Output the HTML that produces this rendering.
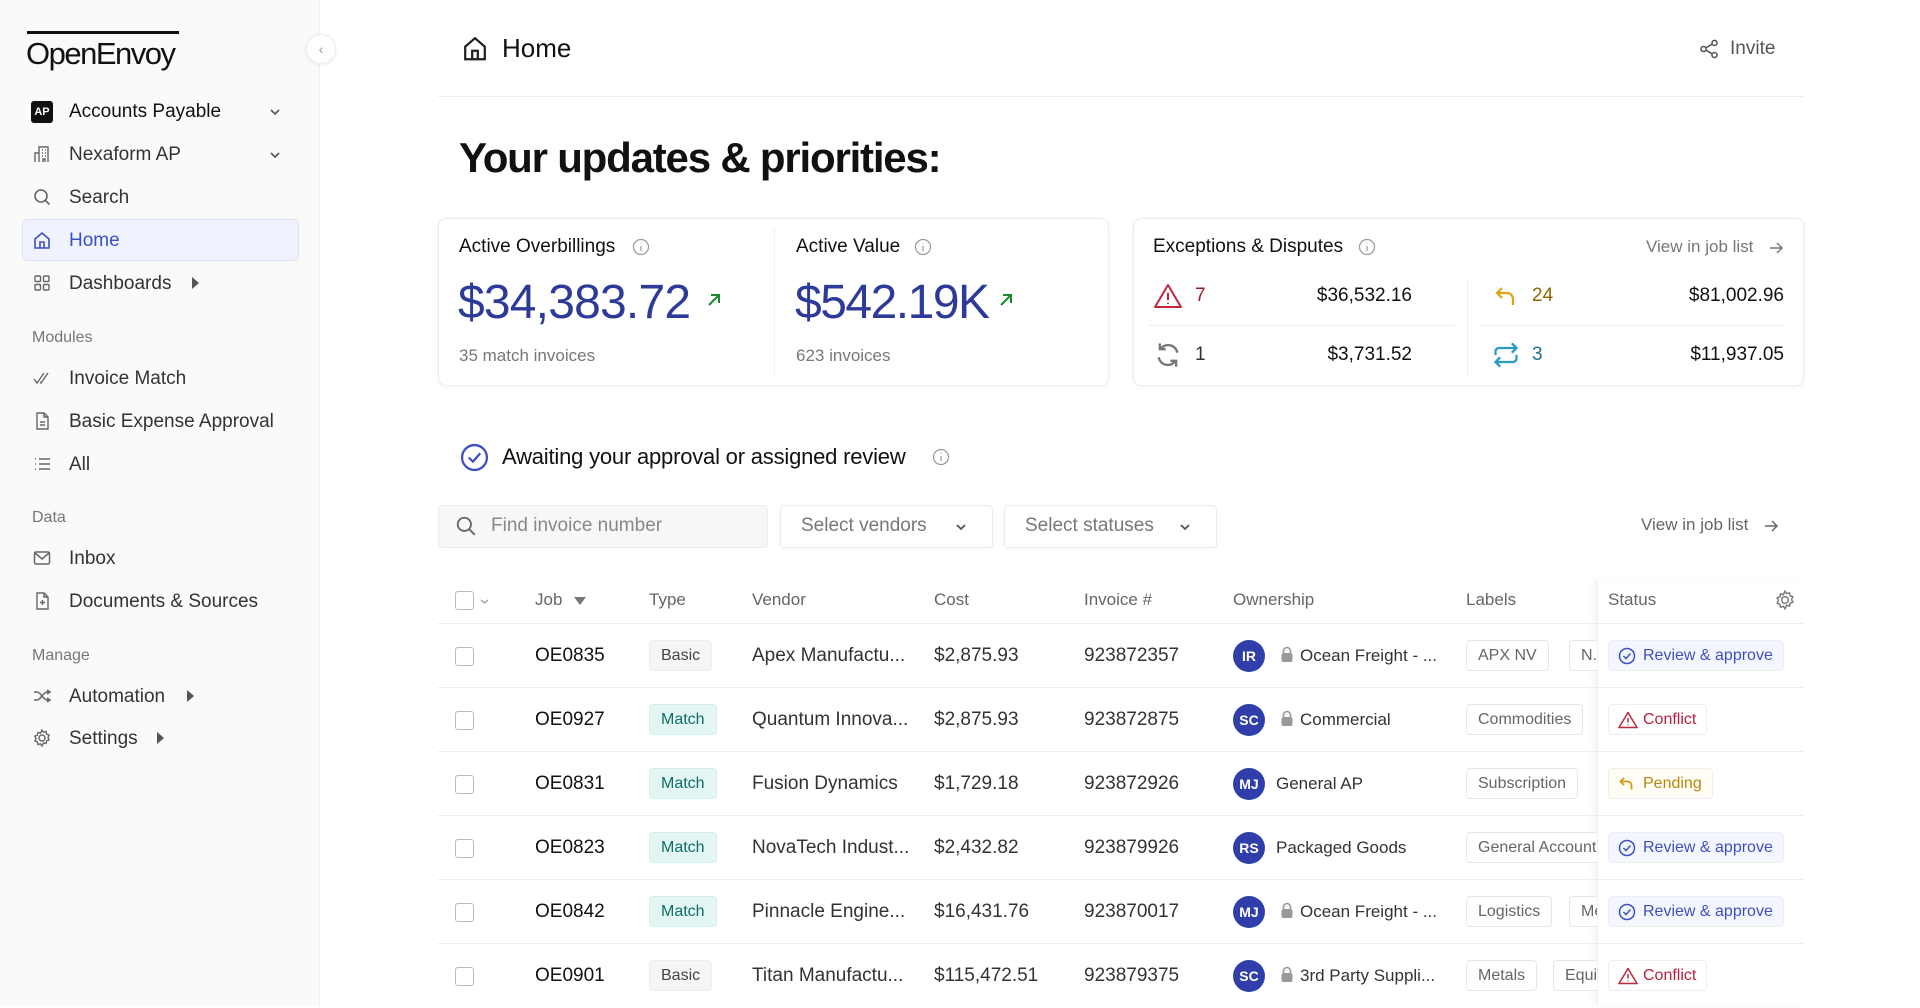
<!DOCTYPE html>
<html><head><meta charset="utf-8"><style>
*{box-sizing:border-box;margin:0;padding:0}
body{width:1920px;height:1006px;overflow:hidden;background:#fff;font-family:"Liberation Sans",sans-serif;color:#1f1f1f;position:relative}
.a{position:absolute;white-space:nowrap}
.t{position:absolute;white-space:nowrap;line-height:24px}
.side{position:absolute;left:0;top:0;width:320px;height:1006px;background:#fafafa;border-right:1px solid #efefef}
.nav{font-size:19px;color:#333}
.sec{font-size:16px;color:#777}
.ic{position:absolute;left:32px;width:20px;height:20px}
.card{position:absolute;border:1px solid #ececec;border-radius:8px;background:#fff;box-shadow:0 1px 4px rgba(0,0,0,.05)}
.th{font-size:17px;color:#666}
.row{position:absolute;left:438px;width:1366px;height:64px;border-bottom:1px solid #eee}
.cb{position:absolute;left:17px;top:23px;width:19px;height:19px;border:1.5px solid #bbb;border-radius:3px}
.c{position:absolute;top:20px;line-height:24px;font-size:19px;white-space:nowrap;color:#333}
.badge{position:absolute;top:16px;height:31px;line-height:29px;padding:0 11px;font-size:16px;border-radius:4px;border:1px solid #eee}
.lab{position:absolute;top:16px;height:31px;line-height:29px;padding:0 11px;font-size:16px;border-radius:4px;border:1px solid #e6e6e6;color:#666;background:#fff}
.av{position:absolute;left:795px;top:16px;width:32px;height:32px;border-radius:50%;background:#2f3ea8;color:#fff;font-size:14px;font-weight:bold;text-align:center;line-height:32px}
.lk{position:absolute;left:842px;top:22px}
.st{position:absolute;left:1170px;top:16px;height:31px;line-height:29px;padding:0 10px 0 34px;font-size:16px;border-radius:4px;border:1px solid #eee;background:#fff}
.st svg{position:absolute;left:9px;top:6px}
</style></head><body>
<svg width="0" height="0" style="position:absolute"><defs><g id="lock"><path d="M3.5 7V5a3.5 3.5 0 0 1 7 0v2" fill="none" stroke="#999" stroke-width="1.6"/><rect x="1.5" y="7" width="11" height="9" rx="2" fill="#999"/></g></defs></svg>
<div class="side">
  <div class="a" style="left:27px;top:31px;width:152px;height:3px;background:#111"></div>
  <div class="a" style="left:26px;top:35px;font-size:31px;letter-spacing:-1.5px;color:#111;line-height:38px">OpenEnvoy</div>
  <div class="a" style="left:306px;top:34px;width:30px;height:30px;border-radius:50%;background:#fff;border:1px solid #eee;box-shadow:0 1px 3px rgba(0,0,0,.08);text-align:center;line-height:28px;color:#999;font-size:14px">&#8249;</div>

  <div class="a" style="left:31px;top:101px;width:22px;height:22px;background:#111;border-radius:3px;color:#fff;font-size:11px;font-weight:bold;text-align:center;line-height:22px">AP</div>
  <div class="t nav" style="left:69px;top:100px;color:#111">Accounts Payable</div>
  <svg class="a" style="left:268px;top:105px" width="14" height="14" viewBox="0 0 14 14"><path d="M3 5l4 4 4-4" fill="none" stroke="#555" stroke-width="1.6"/></svg>

  <svg class="ic" style="top:144px" viewBox="0 0 20 20" fill="none" stroke="#666" stroke-width="1.4"><path d="M3 18V9h4v9M7 18V3h9v15M10 6h1M13 6h1M10 9h1M13 9h1M10 12h1M13 12h1M11 18v-3h2v3"/></svg>
  <div class="t nav" style="left:69px;top:143px">Nexaform AP</div>
  <svg class="a" style="left:268px;top:148px" width="14" height="14" viewBox="0 0 14 14"><path d="M3 5l4 4 4-4" fill="none" stroke="#555" stroke-width="1.6"/></svg>

  <svg class="ic" style="top:187px" viewBox="0 0 20 20" fill="none" stroke="#666" stroke-width="1.6"><circle cx="9" cy="9" r="6"/><path d="M13.5 13.5l4 4"/></svg>
  <div class="t nav" style="left:69px;top:186px">Search</div>

  <div class="a" style="left:22px;top:219px;width:277px;height:42px;background:#f0f2fd;border:1px solid #dde2f7;border-radius:5px"></div>
  <svg class="ic" style="top:230px" viewBox="0 0 20 20" fill="none" stroke="#3d4fc4" stroke-width="1.6"><path d="M3 9l7-6 7 6v9H3z"/><path d="M8 18v-6h4v6"/></svg>
  <div class="t nav" style="left:69px;top:229px;color:#3d4fc4">Home</div>

  <svg class="ic" style="top:273px" viewBox="0 0 20 20" fill="none" stroke="#666" stroke-width="1.4"><rect x="3" y="3" width="5.5" height="5.5" rx="1"/><rect x="11.5" y="3" width="5.5" height="5.5" rx="1"/><rect x="3" y="11.5" width="5.5" height="5.5" rx="1"/><rect x="11.5" y="11.5" width="5.5" height="5.5" rx="1"/></svg>
  <div class="t nav" style="left:69px;top:272px">Dashboards</div>
  <div class="a" style="left:192px;top:277px;width:0;height:0;border-left:7px solid #555;border-top:6px solid transparent;border-bottom:6px solid transparent"></div>

  <div class="t sec" style="left:32px;top:326px">Modules</div>
  <svg class="ic" style="top:368px" viewBox="0 0 20 20" fill="none" stroke="#666" stroke-width="1.4"><path d="M2 11l3 4 7-10M8 14l1 1 7-10"/></svg>
  <div class="t nav" style="left:69px;top:367px">Invoice Match</div>
  <svg class="ic" style="top:411px" viewBox="0 0 20 20" fill="none" stroke="#666" stroke-width="1.4"><path d="M5 2h7l4 4v12H5zM12 2v4h4M8 11h5M8 14h5"/></svg>
  <div class="t nav" style="left:69px;top:410px">Basic Expense Approval</div>
  <svg class="ic" style="top:454px" viewBox="0 0 20 20" fill="none" stroke="#666" stroke-width="1.4"><path d="M7 5h11M7 10h11M7 15h11M3 5h1M3 10h1M3 15h1"/></svg>
  <div class="t nav" style="left:69px;top:453px">All</div>

  <div class="t sec" style="left:32px;top:506px">Data</div>
  <svg class="ic" style="top:548px" viewBox="0 0 20 20" fill="none" stroke="#666" stroke-width="1.5"><rect x="2.5" y="4" width="15" height="12" rx="1.5"/><path d="M3 5l7 6 7-6"/></svg>
  <div class="t nav" style="left:69px;top:547px">Inbox</div>
  <svg class="ic" style="top:591px" viewBox="0 0 20 20" fill="none" stroke="#666" stroke-width="1.4"><path d="M5 2h7l4 4v12H5zM12 2v4h4M10.5 9v5M8 11.5h5"/></svg>
  <div class="t nav" style="left:69px;top:590px">Documents &amp; Sources</div>

  <div class="t sec" style="left:32px;top:644px">Manage</div>
  <svg class="ic" style="top:686px" viewBox="0 0 20 20" fill="none" stroke="#666" stroke-width="1.5"><path d="M2 6h3c4 0 6 8 10 8h3M2 14h3c4 0 6-8 10-8h3M15 4l3 2-3 2M15 12l3 2-3 2"/></svg>
  <div class="t nav" style="left:69px;top:685px">Automation</div>
  <div class="a" style="left:187px;top:690px;width:0;height:0;border-left:7px solid #555;border-top:6px solid transparent;border-bottom:6px solid transparent"></div>
  <svg class="ic" style="top:728px" viewBox="0 0 20 20" fill="none" stroke="#666" stroke-width="1.4"><circle cx="10" cy="10" r="3"/><path d="M10 2l1.5 2.2 2.6-.7.5 2.6 2.5 1-1.1 2.4 1.1 2.4-2.5 1-.5 2.6-2.6-.7L10 18l-1.5-2.2-2.6.7-.5-2.6-2.5-1L4 10.5 2.9 8.1l2.5-1 .5-2.6 2.6.7z"/></svg>
  <div class="t nav" style="left:69px;top:727px">Settings</div>
  <div class="a" style="left:157px;top:732px;width:0;height:0;border-left:7px solid #555;border-top:6px solid transparent;border-bottom:6px solid transparent"></div>
</div>

<!-- header -->
<svg class="a" style="left:461px;top:34px" width="28" height="28" viewBox="0 0 20 20" fill="none" stroke="#222" stroke-width="1.6"><path d="M3 9l7-6 7 6v9H3z"/><path d="M8 18v-6h4v6"/></svg>
<div class="a" style="left:502px;top:33px;font-size:26px;line-height:30px;color:#111">Home</div>
<svg class="a" style="left:1698px;top:38px" width="22" height="22" viewBox="0 0 20 20" fill="none" stroke="#555" stroke-width="1.4"><circle cx="15" cy="4.5" r="2.3"/><circle cx="5" cy="10" r="2.3"/><circle cx="15" cy="15.5" r="2.3"/><path d="M7 9l6-3.5M7 11l6 3.5"/></svg>
<div class="t" style="left:1730px;top:37px;font-size:19px;color:#555">Invite</div>
<div class="a" style="left:438px;top:96px;width:1366px;height:1px;background:#eee"></div>

<div class="a" style="left:459px;top:131px;font-size:42px;line-height:54px;font-weight:bold;color:#111;letter-spacing:-1.2px">Your updates &amp; priorities:</div>

<!-- card 1 -->
<div class="card" style="left:438px;top:218px;width:671px;height:168px"></div>
<div class="a" style="left:774px;top:228px;width:1px;height:148px;background:#f0f0f0"></div>
<div class="t" style="left:459px;top:235px;font-size:19px;color:#111">Active Overbillings</div>
<svg class="a" style="left:632px;top:238px" width="18" height="18" viewBox="0 0 18 18" fill="none" stroke="#999" stroke-width="1.2"><circle cx="9" cy="9" r="7.5"/><path d="M9 8v5M9 5.2v.5"/></svg>
<div class="a" style="left:458px;top:275px;font-size:48px;line-height:56px;color:#2d3a99;letter-spacing:-.8px">$34,383.72</div>
<svg class="a" style="left:706px;top:292px" width="16" height="16" viewBox="0 0 16 16" fill="none" stroke="#1a8a2e" stroke-width="2"><path d="M3 13L13 3M5 3h8v8"/></svg>
<div class="t" style="left:459px;top:344px;font-size:17px;color:#777">35 match invoices</div>
<div class="t" style="left:796px;top:235px;font-size:19px;color:#111">Active Value</div>
<svg class="a" style="left:914px;top:238px" width="18" height="18" viewBox="0 0 18 18" fill="none" stroke="#999" stroke-width="1.2"><circle cx="9" cy="9" r="7.5"/><path d="M9 8v5M9 5.2v.5"/></svg>
<div class="a" style="left:795px;top:275px;font-size:48px;line-height:56px;color:#2d3a99;letter-spacing:-1.5px">$542.19K</div>
<svg class="a" style="left:998px;top:292px" width="16" height="16" viewBox="0 0 16 16" fill="none" stroke="#1a8a2e" stroke-width="2"><path d="M3 13L13 3M5 3h8v8"/></svg>
<div class="t" style="left:796px;top:344px;font-size:17px;color:#777">623 invoices</div>

<!-- card 2 -->
<div class="card" style="left:1133px;top:218px;width:671px;height:168px"></div>
<div class="t" style="left:1153px;top:235px;font-size:19px;color:#111">Exceptions &amp; Disputes</div>
<svg class="a" style="left:1358px;top:238px" width="18" height="18" viewBox="0 0 18 18" fill="none" stroke="#999" stroke-width="1.2"><circle cx="9" cy="9" r="7.5"/><path d="M9 8v5M9 5.2v.5"/></svg>
<div class="t" style="left:1646px;top:235px;font-size:17px;color:#777">View in job list</div>
<svg class="a" style="left:1768px;top:240px" width="16" height="16" viewBox="0 0 16 16" fill="none" stroke="#777" stroke-width="1.5"><path d="M2 8h12M9 3l5 5-5 5"/></svg>
<div class="a" style="left:1467px;top:278px;width:1px;height:100px;background:#f0f0f0"></div>
<div class="a" style="left:1149px;top:325px;width:306px;height:1px;background:#eee"></div>
<div class="a" style="left:1480px;top:325px;width:305px;height:1px;background:#eee"></div>
<svg class="a" style="left:1153px;top:282px" width="30" height="28" viewBox="0 0 30 28" fill="none" stroke="#c0283e" stroke-width="2"><path d="M15 3L2 25h26z" stroke-linejoin="round"/><path d="M15 11v7M15 21v1"/></svg>
<div class="t" style="left:1195px;top:284px;font-size:19px;color:#9b2035">7</div>
<div class="t" style="left:1300px;top:284px;width:112px;text-align:right;font-size:19px;color:#111">$36,532.16</div>
<svg class="a" style="left:1494px;top:284px" width="26" height="24" viewBox="0 0 26 24" fill="none" stroke="#e0a312" stroke-width="2.2"><path d="M8 4L3 9l5 5M3 9h10a6 6 0 0 1 6 6v6"/></svg>
<div class="t" style="left:1532px;top:284px;font-size:19px;color:#8a6a00">24</div>
<div class="t" style="left:1660px;top:284px;width:124px;text-align:right;font-size:19px;color:#111">$81,002.96</div>
<svg class="a" style="left:1154px;top:341px" width="28" height="28" viewBox="0 0 24 24" fill="none" stroke="#777" stroke-width="2"><path d="M20 10a8 8 0 0 0-14.5-3M4 14a8 8 0 0 0 14.5 3M5 2v5h5M19 22v-5h-5"/></svg>
<div class="t" style="left:1195px;top:343px;font-size:19px;color:#333">1</div>
<div class="t" style="left:1300px;top:343px;width:112px;text-align:right;font-size:19px;color:#111">$3,731.52</div>
<svg class="a" style="left:1492px;top:341px" width="28" height="28" viewBox="0 0 24 24" fill="none" stroke="#2a9ac9" stroke-width="2"><path d="M17 2l4 4-4 4M3 12v-3a3 3 0 0 1 3-3h15M7 22l-4-4 4-4M21 12v3a3 3 0 0 1-3 3H3"/></svg>
<div class="t" style="left:1532px;top:343px;font-size:19px;color:#1f6f91">3</div>
<div class="t" style="left:1660px;top:343px;width:124px;text-align:right;font-size:19px;color:#111">$11,937.05</div>

<!-- awaiting -->
<svg class="a" style="left:460px;top:443px" width="29" height="29" viewBox="0 0 28 28" fill="none" stroke="#3d4fc4" stroke-width="2.2"><circle cx="14" cy="14" r="12"/><path d="M8.5 14l4 4 7-8"/></svg>
<div class="a" style="left:502px;top:444px;font-size:22px;line-height:26px;color:#111;letter-spacing:-.2px">Awaiting your approval or assigned review</div>
<svg class="a" style="left:932px;top:448px" width="18" height="18" viewBox="0 0 18 18" fill="none" stroke="#999" stroke-width="1.2"><circle cx="9" cy="9" r="7.5"/><path d="M9 8v5M9 5.2v.5"/></svg>

<div class="a" style="left:438px;top:505px;width:330px;height:43px;background:#f7f7f7;border:1px solid #ececec;border-radius:4px"></div>
<svg class="a" style="left:455px;top:515px" width="22" height="22" viewBox="0 0 20 20" fill="none" stroke="#666" stroke-width="1.7"><circle cx="8.5" cy="8.5" r="6"/><path d="M13 13l5 5"/></svg>
<div class="t" style="left:491px;top:514px;font-size:19px;color:#888">Find invoice number</div>
<div class="a" style="left:780px;top:505px;width:213px;height:43px;background:#fff;border:1px solid #ececec;border-radius:4px;box-shadow:0 1px 2px rgba(0,0,0,.04)"></div>
<div class="t" style="left:801px;top:514px;font-size:19px;color:#777">Select vendors</div>
<svg class="a" style="left:954px;top:520px" width="14" height="14" viewBox="0 0 14 14"><path d="M3 5l4 4 4-4" fill="none" stroke="#555" stroke-width="1.8"/></svg>
<div class="a" style="left:1004px;top:505px;width:213px;height:43px;background:#fff;border:1px solid #ececec;border-radius:4px;box-shadow:0 1px 2px rgba(0,0,0,.04)"></div>
<div class="t" style="left:1025px;top:514px;font-size:19px;color:#777">Select statuses</div>
<svg class="a" style="left:1178px;top:520px" width="14" height="14" viewBox="0 0 14 14"><path d="M3 5l4 4 4-4" fill="none" stroke="#555" stroke-width="1.8"/></svg>
<div class="t" style="left:1641px;top:513px;font-size:17px;color:#666">View in job list</div>
<svg class="a" style="left:1763px;top:518px" width="16" height="16" viewBox="0 0 16 16" fill="none" stroke="#666" stroke-width="1.5"><path d="M2 8h12M9 3l5 5-5 5"/></svg>

<!-- table header -->
<div class="a" style="left:1597px;top:580px;width:207px;height:426px;box-shadow:-4px 0 6px rgba(0,0,0,.04);background:transparent"></div>
<div class="a" style="left:1597px;top:580px;width:1px;height:426px;background:#f0f0f0"></div>
<div class="a" style="left:455px;top:591px;width:19px;height:19px;border:1.5px solid #bbb;border-radius:3px"></div>
<svg class="a" style="left:480px;top:597px" width="9" height="9" viewBox="0 0 9 9"><path d="M1 3l3.5 3L8 3" fill="none" stroke="#999" stroke-width="1.2"/></svg>
<div class="t th" style="left:535px;top:588px">Job</div>
<div class="a" style="left:574px;top:597px;width:0;height:0;border-top:8px solid #777;border-left:6px solid transparent;border-right:6px solid transparent"></div>
<div class="t th" style="left:649px;top:588px">Type</div>
<div class="t th" style="left:752px;top:588px">Vendor</div>
<div class="t th" style="left:934px;top:588px">Cost</div>
<div class="t th" style="left:1084px;top:588px">Invoice #</div>
<div class="t th" style="left:1233px;top:588px">Ownership</div>
<div class="t th" style="left:1466px;top:588px">Labels</div>
<div class="t th" style="left:1608px;top:588px">Status</div>
<svg class="a" style="left:1774px;top:589px" width="22" height="22" viewBox="0 0 20 20" fill="none" stroke="#777" stroke-width="1.3"><circle cx="10" cy="10" r="3"/><path d="M10 2l1.5 2.2 2.6-.7.5 2.6 2.5 1-1.1 2.4 1.1 2.4-2.5 1-.5 2.6-2.6-.7L10 18l-1.5-2.2-2.6.7-.5-2.6-2.5-1L4 10.5 2.9 8.1l2.5-1 .5-2.6 2.6.7z"/></svg>
<div class="a" style="left:438px;top:623px;width:1366px;height:1px;background:#eee"></div>

<!-- rows -->
<div class="row" style="top:624px">
 <div class="cb"></div><div class="c" style="left:97px;color:#111">OE0835</div>
 <div class="badge" style="left:211px;background:#f5f5f5;color:#444">Basic</div>
 <div class="c" style="left:314px">Apex Manufactu...</div><div class="c" style="left:496px">$2,875.93</div><div class="c" style="left:646px">923872357</div>
 <div class="av">IR</div><svg class="lk" width="14" height="17" viewBox="0 0 14 17"><use href="#lock"/></svg>
 <div class="c" style="left:862px;font-size:17px;top:20px">Ocean Freight - ...</div>
 <div class="lab" style="left:1028px">APX NV</div>
 <div class="a" style="left:1131px;top:16px;width:28px;height:31px;overflow:hidden"><div class="lab" style="left:0;top:0">N. America</div></div>
 <div class="st" style="color:#3d4fc4;background:#f4f6fe"><svg width="18" height="18" viewBox="0 0 18 18" fill="none" stroke="#3d4fc4" stroke-width="1.5"><circle cx="9" cy="9" r="7.5"/><path d="M5.5 9l2.5 2.5 4.5-5"/></svg>Review &amp; approve</div>
</div>
<div class="row" style="top:688px">
 <div class="cb"></div><div class="c" style="left:97px;color:#111">OE0927</div>
 <div class="badge" style="left:211px;background:#e4f6f3;color:#0f6e66;border-color:#d4efeb">Match</div>
 <div class="c" style="left:314px">Quantum Innova...</div><div class="c" style="left:496px">$2,875.93</div><div class="c" style="left:646px">923872875</div>
 <div class="av">SC</div><svg class="lk" width="14" height="17" viewBox="0 0 14 17"><use href="#lock"/></svg>
 <div class="c" style="left:862px;font-size:17px;top:20px">Commercial</div>
 <div class="lab" style="left:1028px">Commodities</div>
 <div class="st" style="color:#b42340"><svg width="20" height="18" viewBox="0 0 20 18" fill="none" stroke="#c0283e" stroke-width="1.5"><path d="M10 1.5L1 16.5h18z" stroke-linejoin="round"/><path d="M10 7v4.5M10 13.5v.8"/></svg>Conflict</div>
</div>
<div class="row" style="top:752px">
 <div class="cb"></div><div class="c" style="left:97px;color:#111">OE0831</div>
 <div class="badge" style="left:211px;background:#e4f6f3;color:#0f6e66;border-color:#d4efeb">Match</div>
 <div class="c" style="left:314px">Fusion Dynamics</div><div class="c" style="left:496px">$1,729.18</div><div class="c" style="left:646px">923872926</div>
 <div class="av">MJ</div>
 <div class="c" style="left:838px;font-size:17px;top:20px">General AP</div>
 <div class="lab" style="left:1028px">Subscription</div>
 <div class="st" style="color:#b7860b;background:#fffdf5"><svg width="18" height="18" viewBox="0 0 18 18" fill="none" stroke="#d49a10" stroke-width="1.8"><path d="M6 3L2.5 6.5 6 10M2.5 6.5h7a4 4 0 0 1 4 4v4"/></svg>Pending</div>
</div>
<div class="row" style="top:816px">
 <div class="cb"></div><div class="c" style="left:97px;color:#111">OE0823</div>
 <div class="badge" style="left:211px;background:#e4f6f3;color:#0f6e66;border-color:#d4efeb">Match</div>
 <div class="c" style="left:314px">NovaTech Indust...</div><div class="c" style="left:496px">$2,432.82</div><div class="c" style="left:646px">923879926</div>
 <div class="av">RS</div>
 <div class="c" style="left:838px;font-size:17px;top:20px">Packaged Goods</div>
 <div class="a" style="left:1028px;top:16px;width:131px;height:31px;overflow:hidden"><div class="lab" style="left:0;top:0">General Accounting</div></div>
 <div class="st" style="color:#3d4fc4;background:#f4f6fe"><svg width="18" height="18" viewBox="0 0 18 18" fill="none" stroke="#3d4fc4" stroke-width="1.5"><circle cx="9" cy="9" r="7.5"/><path d="M5.5 9l2.5 2.5 4.5-5"/></svg>Review &amp; approve</div>
</div>
<div class="row" style="top:880px">
 <div class="cb"></div><div class="c" style="left:97px;color:#111">OE0842</div>
 <div class="badge" style="left:211px;background:#e4f6f3;color:#0f6e66;border-color:#d4efeb">Match</div>
 <div class="c" style="left:314px">Pinnacle Engine...</div><div class="c" style="left:496px">$16,431.76</div><div class="c" style="left:646px">923870017</div>
 <div class="av">MJ</div><svg class="lk" width="14" height="17" viewBox="0 0 14 17"><use href="#lock"/></svg>
 <div class="c" style="left:862px;font-size:17px;top:20px">Ocean Freight - ...</div>
 <div class="lab" style="left:1028px">Logistics</div>
 <div class="a" style="left:1131px;top:16px;width:28px;height:31px;overflow:hidden"><div class="lab" style="left:0;top:0">Metals</div></div>
 <div class="st" style="color:#3d4fc4;background:#f4f6fe"><svg width="18" height="18" viewBox="0 0 18 18" fill="none" stroke="#3d4fc4" stroke-width="1.5"><circle cx="9" cy="9" r="7.5"/><path d="M5.5 9l2.5 2.5 4.5-5"/></svg>Review &amp; approve</div>
</div>
<div class="row" style="top:944px;border-bottom:none">
 <div class="cb"></div><div class="c" style="left:97px;color:#111">OE0901</div>
 <div class="badge" style="left:211px;background:#f5f5f5;color:#444">Basic</div>
 <div class="c" style="left:314px">Titan Manufactu...</div><div class="c" style="left:496px">$115,472.51</div><div class="c" style="left:646px">923879375</div>
 <div class="av">SC</div><svg class="lk" width="14" height="17" viewBox="0 0 14 17"><use href="#lock"/></svg>
 <div class="c" style="left:862px;font-size:17px;top:20px">3rd Party Suppli...</div>
 <div class="lab" style="left:1028px">Metals</div>
 <div class="a" style="left:1115px;top:16px;width:44px;height:31px;overflow:hidden"><div class="lab" style="left:0;top:0">Equipment</div></div>
 <div class="st" style="color:#b42340"><svg width="20" height="18" viewBox="0 0 20 18" fill="none" stroke="#c0283e" stroke-width="1.5"><path d="M10 1.5L1 16.5h18z" stroke-linejoin="round"/><path d="M10 7v4.5M10 13.5v.8"/></svg>Conflict</div>
</div>
</body></html>
